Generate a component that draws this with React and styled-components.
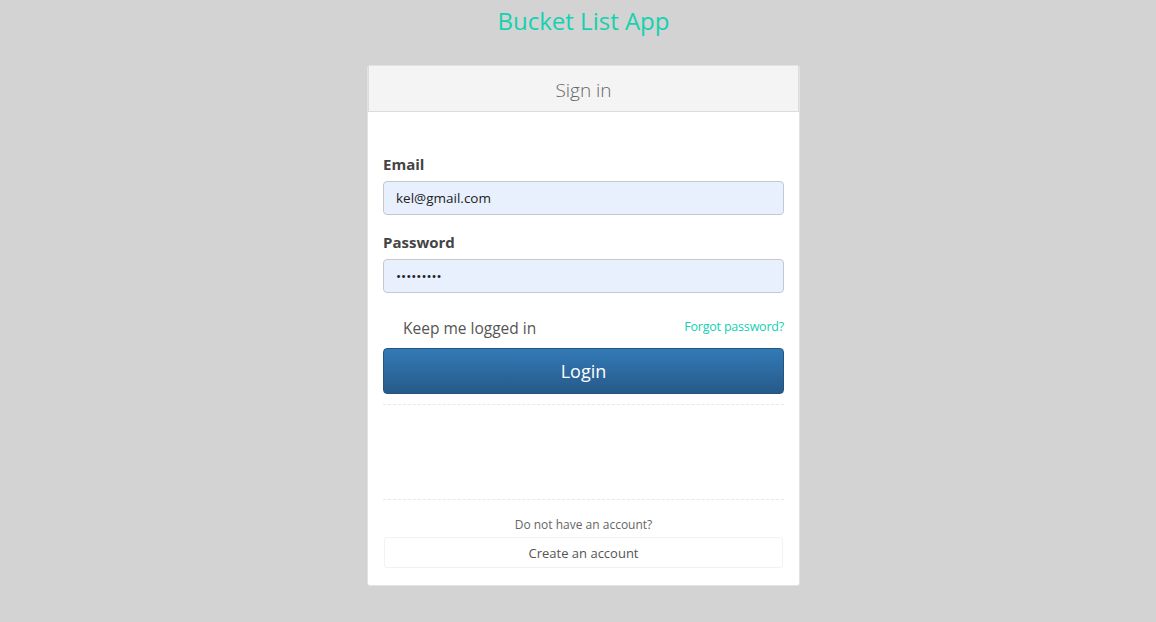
import React from "react";
import styled, { createGlobalStyle } from "styled-components";

const Global = createGlobalStyle`
  html, body { margin: 0; padding: 0; background: #d3d3d3; }
  body { font-family: "Open Sans", "Noto Sans", sans-serif; }
`;

const Page = styled.div`
  min-height: 622px;
  padding-left: 11px;
  display: flex;
  flex-direction: column;
  align-items: center;
`;

const Title = styled.h1`
  margin: 5px 0 0;
  height: 60px;
  font-size: 24px;
  font-weight: 400;
  color: #14d1b0;
  line-height: 32px;
`;

const Card = styled.div`
  width: 431px;
  background: #fff;
  border: 1px solid #e2e2e2;
  border-radius: 3px;
  display: flex;
  flex-direction: column;
`;

const CardHeader = styled.div`
  height: 46px;
  box-sizing: border-box;
  padding-top: 3px;
  background: #f4f4f4;
  border: 1px solid #dcdcdc;
  border-top: none;
  display: flex;
  align-items: center;
  justify-content: center;
  font-size: 19px;
  font-weight: 300;
  color: #666;
`;

const Body = styled.div`
  padding: 41px 15px 17px;
  display: flex;
  flex-direction: column;
`;

const Label = styled.label`
  font-size: 15px;
  font-weight: 700;
  color: #444;
  margin-bottom: 6px;
  line-height: 22px;
`;

const Input = styled.input`
  height: 34px;
  box-sizing: border-box;
  border: 1px solid #c4c8d0;
  border-radius: 4px;
  background: #e8f0fe;
  padding: 0 12px;
  font-family: inherit;
  font-size: 13.5px;
  color: #222;
  margin-bottom: ${(p) => p.$mb || 0}px;
  outline: none;
`;

const OptionsRow = styled.div`
  display: flex;
  justify-content: space-between;
  align-items: center;
  margin-top: 20px;
  height: 24px;
`;

const Keep = styled.span`
  font-size: 15.5px;
  color: #555;
  margin-left: 20px;
  margin-top: 6px;
`;

const Forgot = styled.a`
  font-size: 12.5px;
  color: #14d1b0;
  text-decoration: none;
  letter-spacing: -0.2px;
  margin-top: 2px;
`;

const LoginButton = styled.button`
  margin-top: 11px;
  height: 46px;
  border: 1px solid #245580;
  border-radius: 4px;
  background: linear-gradient(to bottom, #337ab7 0%, #265a88 100%);
  color: #fff;
  font-family: inherit;
  font-size: 18px;
  cursor: pointer;
`;

const Divider = styled.hr`
  border: none;
  border-top: 1px dashed #e8e8e8;
  margin: ${(p) => p.$mt}px 0 0;
`;

const Question = styled.div`
  text-align: center;
  font-size: 12px;
  color: #666;
  margin-top: 16px;
`;

const CreateBox = styled.a`
  margin: 4px 1px 0;
  height: 31px;
  box-sizing: border-box;
  border: 1px solid #f2f2f2;
  border-radius: 3px;
  display: flex;
  align-items: center;
  justify-content: center;
  font-size: 13px;
  color: #555;
  text-decoration: none;
`;

export default function App() {
  return (
    <>
      <Global />
      <Page>
        <Title>Bucket List App</Title>
        <Card>
          <CardHeader>Sign in</CardHeader>
          <Body>
            <Label>Email</Label>
            <Input type="email" defaultValue="kel@gmail.com" $mb={16} />
            <Label>Password</Label>
            <Input type="password" defaultValue="123456789" />
            <OptionsRow>
              <Keep>Keep me logged in</Keep>
              <Forgot href="#">Forgot password?</Forgot>
            </OptionsRow>
            <LoginButton>Login</LoginButton>
            <Divider $mt={10} />
            <Divider $mt={94} />
            <Question>Do not have an account?</Question>
            <CreateBox href="#">Create an account</CreateBox>
          </Body>
        </Card>
      </Page>
    </>
  );
}
